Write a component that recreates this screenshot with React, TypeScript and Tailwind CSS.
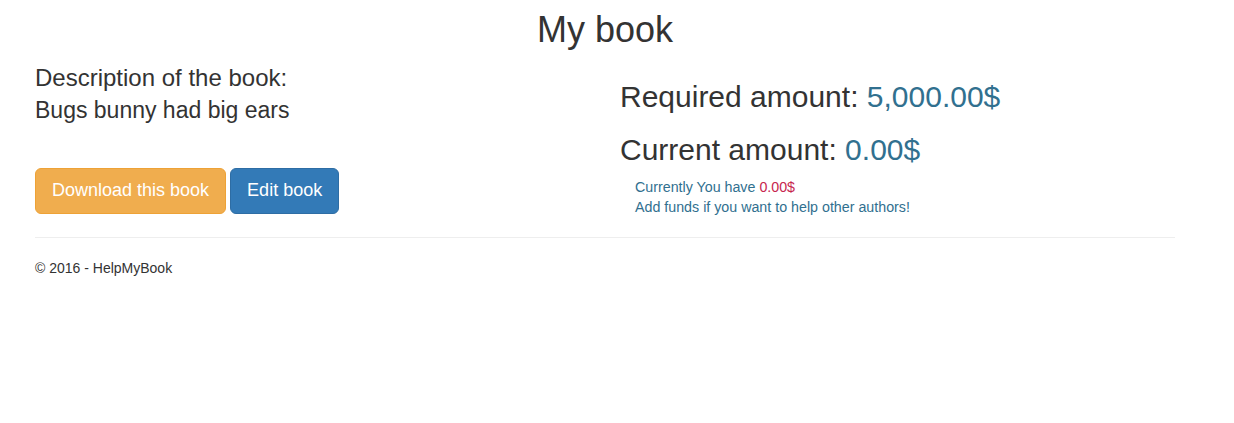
export default function App() {
  return (
    <div className="min-h-screen bg-white font-['Liberation_Sans',Arial,sans-serif] text-[14px] leading-[20px] text-[#333]">
      <div className="ml-[35px] w-[1140px]">
        {/* Title */}
        <h1 className="mt-[10px] mb-[10px] text-center text-[36px] leading-[1.1] font-normal">
          My book
        </h1>

        <div className="grid grid-cols-2 gap-[30px]">
          {/* Left column */}
          <div>
            <div className="mt-[2px] text-[24px] leading-[32px]">
              <div>Description of the book:</div>
              <div className="text-[23px]">Bugs bunny had big ears</div>
            </div>
            <div className="mt-[42px] flex gap-[4px]">
              <button className="h-[46px] rounded-[6px] border border-[#eea236] bg-[#f0ad4e] px-[16px] pt-[1px] text-[18px] leading-[1.3333] text-white">
                Download this book
              </button>
              <button className="h-[46px] rounded-[6px] border border-[#2e6da4] bg-[#337ab7] px-[16px] pt-[1px] text-[18px] leading-[1.3333] text-white">
                Edit book
              </button>
            </div>
          </div>

          {/* Right column */}
          <div>
            <h2 className="mt-[20px] text-[30px] leading-[33px] font-normal">
              Required amount: <span className="text-[#31708f]">5,000.00$</span>
            </h2>
            <h2 className="mt-[20px] text-[30px] leading-[33px] font-normal">
              Current amount: <span className="text-[#31708f]">0.00$</span>
            </h2>
            <div className="mt-[11px] pl-[15px] text-[14.25px] text-[#31708f]">
              <div>
                Currently You have <span className="text-[#c7254e]">0.00$</span>
              </div>
              <div>Add funds if you want to help other authors!</div>
            </div>
          </div>
        </div>

        <hr className="mt-[20px] border-0 border-t border-[#eee]" />
        <footer className="mt-[20px]">
          <p>&copy; 2016 - HelpMyBook</p>
        </footer>
      </div>
    </div>
  );
}
